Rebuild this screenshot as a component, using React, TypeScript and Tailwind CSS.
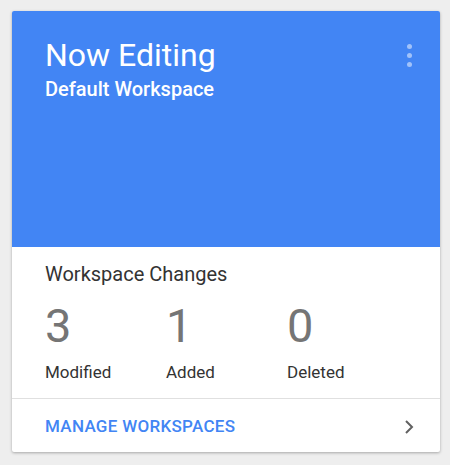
export default function App() {
  const stats = [
    { value: "3", label: "Modified" },
    { value: "1", label: "Added" },
    { value: "0", label: "Deleted" },
  ];

  return (
    <div
      className="w-[450px] h-[465px] bg-[#eeeeee] pt-[11px] pl-[12px]"
      style={{ fontFamily: "Roboto, 'Liberation Sans', sans-serif" }}
    >
      <div className="w-[428px] h-[441px] bg-white rounded-[2px] overflow-hidden shadow-[0_1px_3px_rgba(0,0,0,0.3)] flex flex-col">
        {/* Blue header */}
        <div className="h-[236px] bg-[#4285f4] flex justify-between pl-[33px] pr-[28px] pt-[24px]">
          <div className="text-white">
            <div className="text-[32px] leading-[40px]">Now Editing</div>
            <div className="text-[20px] leading-[26px] font-medium mt-[1px]">Default Workspace</div>
          </div>
          <div className="flex flex-col gap-[4px] pt-[9px] items-center">
            <span className="w-[5px] h-[5px] rounded-full bg-white/50" />
            <span className="w-[5px] h-[5px] rounded-full bg-white/50" />
            <span className="w-[5px] h-[5px] rounded-full bg-white/50" />
          </div>
        </div>

        {/* Changes */}
        <div className="pl-[33px] pt-[14px] h-[151px]">
          <div className="text-[20px] leading-[26px] text-[#333333]">Workspace Changes</div>
          <div className="flex mt-[12px]">
            {stats.map((s) => (
              <div key={s.label} className="w-[121px]">
                <div className="text-[47px] leading-[54px] text-[#757575]">{s.value}</div>
                <div className="text-[17px] leading-[22px] text-[#333333] mt-[8px]">{s.label}</div>
              </div>
            ))}
          </div>
        </div>

        {/* Footer */}
        <div className="border-t border-[#e0e0e0] flex-1 flex items-center justify-between pl-[33px] pr-[26px] pt-[2px]">
          <span className="text-[17px] font-medium tracking-[0.3px] text-[#4285f4]">MANAGE WORKSPACES</span>
          <svg width="10" height="16" viewBox="0 0 10 16" fill="none">
            <path d="M2 2l6 6-6 6" stroke="#616161" strokeWidth="2" />
          </svg>
        </div>
      </div>
    </div>
  );
}
